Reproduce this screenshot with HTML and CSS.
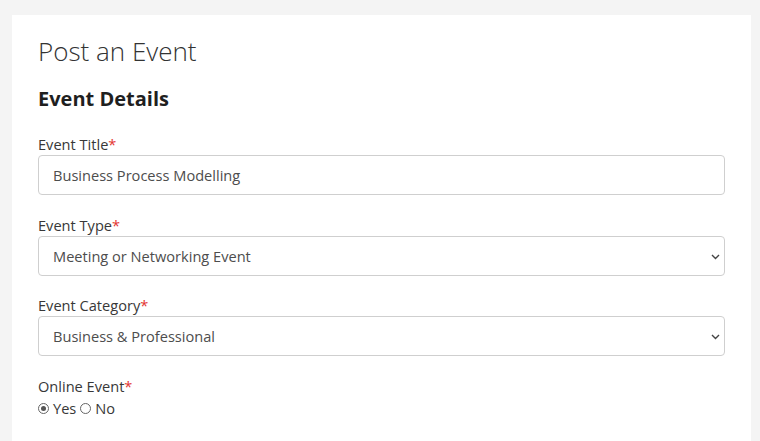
FILE: index.html
```html
<!DOCTYPE html>
<html lang="en">
<head>
<meta charset="utf-8">
<title>Post an Event</title>
<link rel="stylesheet" href="styles.css">
</head>
<body>
<main class="card">
  <h1 class="page-title">Post an Event</h1>
  <h2 class="section-title">Event Details</h2>
  <form class="form">
    <div class="field">
      <label class="label" for="title">Event Title<span class="req">*</span></label>
      <input class="control" id="title" type="text" value="Business Process Modelling">
    </div>
    <div class="field field-type">
      <label class="label" for="type">Event Type<span class="req">*</span></label>
      <div class="select-wrap">
        <select class="control select" id="type">
          <option>Meeting or Networking Event</option>
        </select>
        <svg class="chev" width="9" height="6" viewBox="0 0 9 6"><path d="M1 1 L4.5 4.5 L8 1" fill="none" stroke="#444" stroke-width="1.4"/></svg>
      </div>
    </div>
    <div class="field">
      <label class="label" for="cat">Event Category<span class="req">*</span></label>
      <div class="select-wrap">
        <select class="control select" id="cat">
          <option>Business &amp; Professional</option>
        </select>
        <svg class="chev" width="9" height="6" viewBox="0 0 9 6"><path d="M1 1 L4.5 4.5 L8 1" fill="none" stroke="#444" stroke-width="1.4"/></svg>
      </div>
    </div>
    <div class="field">
      <span class="label">Online Event<span class="req">*</span></span>
      <div class="radios">
        <label class="radio"><input type="radio" name="online" checked><span>Yes</span></label>
        <label class="radio"><input type="radio" name="online"><span>No</span></label>
      </div>
    </div>
  </form>
</main>
</body>
</html>
```

FILE: styles.css
```css
html, body {
  margin: 0;
  padding: 0;
  background: #f4f4f4;
  font-family: "Open Sans", "Noto Sans", "Liberation Sans", sans-serif;
  color: #212529;
}
.card {
  margin: 15px 0 0 12px;
  width: 739px;
  min-height: 440px;
  box-sizing: border-box;
  background: #fff;
  padding: 18px 26px 0 26px;
}
.page-title {
  margin: 0;
  font-size: 26px;
  font-weight: 300;
  line-height: 36px;
  color: #333;
}
.section-title {
  margin: 16px 0 0 0;
  font-size: 20px;
  font-weight: 700;
  line-height: 28px;
  color: #1f1f1f;
}
.form {
  margin-top: 21px;
}
.field {
  margin-bottom: 20px;
}
.field-type {
  margin-bottom: 19px;
}
.label {
  display: block;
  font-size: 14.6px;
  line-height: 21px;
  color: #383838;
}
.req {
  color: #e3342f;
}
.control {
  display: block;
  width: 100%;
  height: 40px;
  box-sizing: border-box;
  border: 1px solid #cfcfcf;
  border-radius: 4px;
  padding: 0 14px;
  font-family: inherit;
  font-size: 14.6px;
  color: #4d4d4d;
  background: #fff;
  outline: none;
}
.select-wrap {
  position: relative;
}
.select {
  appearance: none;
  -webkit-appearance: none;
}
.chev {
  position: absolute;
  right: 5px;
  top: 18px;
  pointer-events: none;
}
.radios {
  display: flex;
  gap: 4px;
  margin-top: 1px;
}
.radio {
  display: flex;
  align-items: center;
  gap: 4px;
  font-size: 14.6px;
  line-height: 20px;
  color: #383838;
}
.radio input {
  appearance: none;
  -webkit-appearance: none;
  margin: 0;
  width: 11px;
  height: 11px;
  border: 1px solid #666;
  border-radius: 50%;
  box-sizing: border-box;
  position: relative;
  background: #fff;
}
.radio input:checked::after {
  content: "";
  position: absolute;
  left: 2px;
  top: 2px;
  width: 5px;
  height: 5px;
  border-radius: 50%;
  background: #555;
}
```
